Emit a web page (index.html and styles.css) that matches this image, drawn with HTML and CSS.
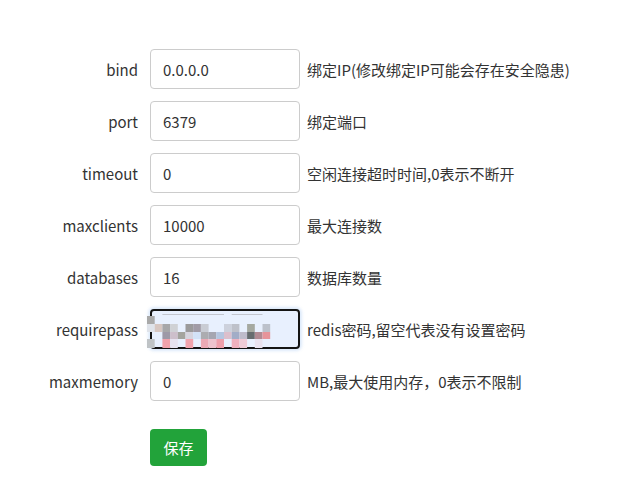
FILE: index.html
```html
<!DOCTYPE html>
<html lang="zh-CN">
<head>
<meta charset="utf-8">
<title>Redis 配置</title>
<link rel="stylesheet" href="styles.css">
</head>
<body>
<form class="config">
  <div class="row">
    <label class="label" for="bind">bind</label>
    <input class="control" id="bind" value="0.0.0.0">
    <span class="help">绑定IP(修改绑定IP可能会存在安全隐患)</span>
  </div>
  <div class="row">
    <label class="label" for="port">port</label>
    <input class="control" id="port" value="6379">
    <span class="help">绑定端口</span>
  </div>
  <div class="row">
    <label class="label" for="timeout">timeout</label>
    <input class="control" id="timeout" value="0">
    <span class="help">空闲连接超时时间,0表示不断开</span>
  </div>
  <div class="row">
    <label class="label" for="maxclients">maxclients</label>
    <input class="control" id="maxclients" value="10000">
    <span class="help">最大连接数</span>
  </div>
  <div class="row">
    <label class="label" for="databases">databases</label>
    <input class="control" id="databases" value="16">
    <span class="help">数据库数量</span>
  </div>
  <div class="row">
    <label class="label" for="requirepass">requirepass</label>
    <div class="field">
      <input class="control control-focus" id="requirepass" value="">
      <svg class="mosaic" width="140" height="42" viewBox="0 0 140 42" aria-hidden="true">
        <g fill="#c3c6cf">
          <rect x="162" y="0" width="0" height="0"/>
          <rect x="15.4" y="4" width="61.6" height="1"/>
          <rect x="84.7" y="4" width="30.8" height="1"/>
        </g>
        <rect x="0" y="6" width="7.7" height="8" fill="#a9a9a9"/>
        <rect x="0" y="14" width="7.7" height="8" fill="#dfe3ea"/>
        <rect x="7.7" y="14" width="7.7" height="8" fill="#d6c6c1"/>
        <rect x="15.4" y="14" width="7.7" height="8" fill="#a7a7a9"/>
        <rect x="23.1" y="14" width="7.7" height="8" fill="#cfd1d5"/>
        <rect x="38.5" y="14" width="7.7" height="8" fill="#9b9a9b"/>
        <rect x="46.2" y="14" width="7.7" height="8" fill="#a19ba6"/>
        <rect x="53.9" y="14" width="7.7" height="8" fill="#c9ccd4"/>
        <rect x="77" y="14" width="7.7" height="8" fill="#cdd1dc"/>
        <rect x="84.7" y="14" width="7.7" height="8" fill="#bec1ca"/>
        <rect x="100.1" y="14" width="7.7" height="8" fill="#a5a9a1"/>
        <rect x="115.5" y="14" width="7.7" height="8" fill="#bcc1cb"/>
        <rect x="15.4" y="22" width="7.7" height="7" fill="#9e99a7"/>
        <rect x="23.1" y="22" width="7.7" height="7" fill="#cdbfcb"/>
        <rect x="30.8" y="22" width="7.7" height="7" fill="#a4a49e"/>
        <rect x="38.5" y="22" width="7.7" height="7" fill="#d6d4de"/>
        <rect x="46.2" y="22" width="7.7" height="7" fill="#d3e2f7"/>
        <rect x="53.9" y="22" width="7.7" height="7" fill="#acacb0"/>
        <rect x="61.6" y="22" width="7.7" height="7" fill="#a5a6b1"/>
        <rect x="69.3" y="22" width="7.7" height="7" fill="#b5c6e0"/>
        <rect x="77" y="22" width="7.7" height="7" fill="#dcbfcc"/>
        <rect x="84.7" y="22" width="7.7" height="7" fill="#a2adc7"/>
        <rect x="92.4" y="22" width="7.7" height="7" fill="#bebbcb"/>
        <rect x="100.1" y="22" width="7.7" height="7" fill="#666c6f"/>
        <rect x="107.8" y="22" width="7.7" height="7" fill="#b08a93"/>
        <rect x="115.5" y="22" width="7.7" height="7" fill="#e6949b"/>
        <rect x="0" y="29" width="7.7" height="9" fill="#bfc3c6"/>
        <rect x="15.4" y="29" width="7.7" height="9" fill="#f0a2ab"/>
        <rect x="23.1" y="29" width="7.7" height="9" fill="#e7e3f0"/>
        <rect x="38.5" y="29" width="7.7" height="9" fill="#f0a3ad"/>
        <rect x="53.9" y="29" width="7.7" height="9" fill="#eba9b5"/>
        <rect x="61.6" y="29" width="7.7" height="9" fill="#edc3ce"/>
        <rect x="69.3" y="29" width="7.7" height="9" fill="#ee9fab"/>
        <rect x="84.7" y="29" width="7.7" height="9" fill="#efb1bf"/>
        <rect x="92.4" y="29" width="7.7" height="9" fill="#eecbd7"/>
        <rect x="107.8" y="29" width="7.7" height="9" fill="#e8e2ef"/>
      </svg>
    </div>
    <span class="help">redis密码,留空代表没有设置密码</span>
  </div>
  <div class="row">
    <label class="label" for="maxmemory">maxmemory</label>
    <input class="control" id="maxmemory" value="0">
    <span class="help">MB,最大使用内存，0表示不限制</span>
  </div>
  <div class="actions">
    <button type="button" class="btn-save">保存</button>
  </div>
</form>
</body>
</html>
```

FILE: styles.css
```css
* { box-sizing: border-box; }

html, body {
  margin: 0;
  padding: 0;
  background: #ffffff;
}

body {
  font-family: "Noto Sans CJK SC", "Noto Sans", sans-serif;
  font-size: 15px;
  color: #333333;
}

.config {
  display: flex;
  flex-direction: column;
  gap: 12px;
  padding-top: 49px;
}

.row {
  display: grid;
  grid-template-columns: 138px 150px auto;
  column-gap: 12px;
  align-items: center;
  height: 40px;
}

.label {
  text-align: right;
  color: #333333;
}

.help {
  margin-left: -5px;
  color: #333333;
  white-space: nowrap;
}

.control {
  width: 150px;
  height: 40px;
  padding: 0 12px;
  border: 1px solid #cccccc;
  border-radius: 4px;
  font-family: inherit;
  font-size: 15px;
  color: #333333;
  background: #ffffff;
  outline: none;
}

.field {
  position: relative;
  width: 150px;
  height: 40px;
}

.control-focus {
  background: #e8f0fe;
  border: 2px solid #141414;
  box-shadow: 0 0 3px 2px rgba(120, 170, 240, 0.25);
}

.mosaic {
  position: absolute;
  left: -3px;
  top: 1px;
}

.actions {
  padding-left: 150px;
  padding-top: 16px;
}

.btn-save {
  display: block;
  width: 57px;
  height: 37px;
  padding: 0;
  border: none;
  border-radius: 4px;
  background: #22a33a;
  color: #ffffff;
  font-family: inherit;
  font-size: 15px;
}
```
